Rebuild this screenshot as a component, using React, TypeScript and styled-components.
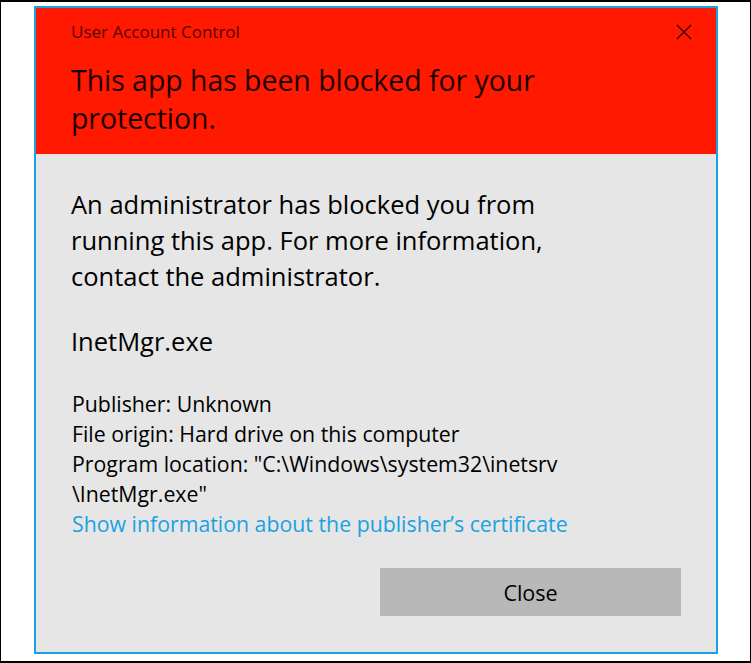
import styled, { createGlobalStyle } from "styled-components";

const GlobalStyle = createGlobalStyle`
  html, body {
    margin: 0;
    padding: 0;
    background: #ffffff;
  }
  * {
    box-sizing: border-box;
  }
`;

const details = [
  "Publisher: Unknown",
  "File origin: Hard drive on this computer",
];

const App = () => {
  return (
    <>
      <GlobalStyle />
      <Frame>
        <Dialog>
          <Header>
            <TitleRow>
              <Caption>User Account Control</Caption>
              <CloseIcon aria-label="Close">
                <svg width="16" height="16" viewBox="0 0 16 16">
                  <path d="M1 1 L15 15 M15 1 L1 15" stroke="#3a0000" strokeWidth="1.4" fill="none" />
                </svg>
              </CloseIcon>
            </TitleRow>
            <Headline>
              This app has been blocked for your
              <br />
              protection.
            </Headline>
          </Header>
          <Body>
            <Message>
              An administrator has blocked you from
              <br />
              running this app. For more information,
              <br />
              contact the administrator.
            </Message>
            <AppName>InetMgr.exe</AppName>
            <Details>
              {details.map((line) => (
                <DetailLine key={line}>{line}</DetailLine>
              ))}
              <DetailLine>
                Program location: "C:\Windows\system32\inetsrv
                <br />
                \InetMgr.exe"
              </DetailLine>
              <CertLink href="#">Show information about the publisher’s certificate</CertLink>
            </Details>
            <Actions>
              <Button type="button">Close</Button>
            </Actions>
          </Body>
        </Dialog>
      </Frame>
    </>
  );
};

export default App;

const Frame = styled.div`
  width: 751px;
  height: 663px;
  border: 1px solid #000;
  border-top-width: 2px;
  border-bottom-width: 2px;
  padding: 4px 33px 0 33px;
  font-family: "Open Sans", "Noto Sans", sans-serif;
`;

const Dialog = styled.div`
  width: 684px;
  height: 648px;
  border: 2px solid #1ba1e2;
  display: flex;
  flex-direction: column;
  background: #e6e6e6;
`;

const Header = styled.div`
  background: #fe1900;
  height: 146px;
  padding: 14px 24px 0 35px;
`;

const TitleRow = styled.div`
  display: flex;
  align-items: center;
  justify-content: space-between;
  height: 20px;
`;

const Caption = styled.div`
  font-size: 17px;
  line-height: 20px;
  color: #5a0300;
`;

const CloseIcon = styled.div`
  width: 16px;
  height: 16px;
  display: flex;
`;

const Headline = styled.h1`
  margin: 19px 0 0;
  font-size: 28.4px;
  font-weight: 400;
  line-height: 38px;
  color: #1c0000;
`;

const Body = styled.div`
  flex: 1;
  padding: 32px 35px 0 35px;
  color: #000;
`;

const Message = styled.p`
  margin: 0;
  font-size: 25.5px;
  line-height: 36px;
`;

const AppName = styled.div`
  margin-top: 29px;
  font-size: 25.5px;
  line-height: 36px;
`;

const Details = styled.div`
  margin-top: 30px;
  padding-left: 1px;
  display: flex;
  flex-direction: column;
`;

const DetailLine = styled.div`
  font-size: 21.3px;
  line-height: 30px;
`;

const CertLink = styled.a`
  font-size: 21.3px;
  line-height: 30px;
  color: #1ba1e2;
  text-decoration: none;
`;

const Actions = styled.div`
  margin-top: 29px;
  display: flex;
  justify-content: flex-end;
`;

const Button = styled.button`
  width: 301px;
  height: 48px;
  border: none;
  background: #b8b8b8;
  font-family: inherit;
  font-size: 21.5px;
  color: #000;
  padding: 0;
`;
